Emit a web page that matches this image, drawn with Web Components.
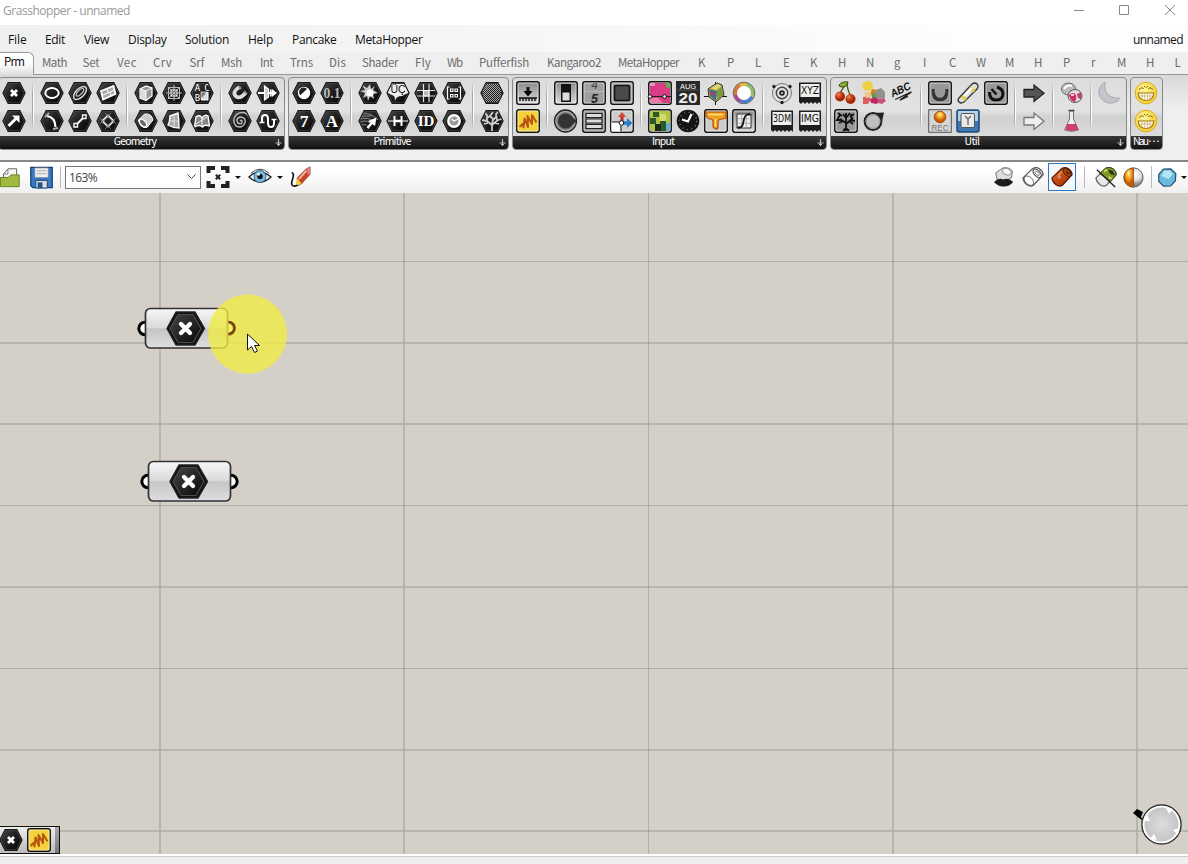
<!DOCTYPE html>
<html lang="en">
<head>
<meta charset="utf-8">
<title>Grasshopper - unnamed</title>
<style>
html,body{margin:0;height:100%;overflow:hidden}
body{font-family:"Open Sans","Noto Sans",sans-serif;font-size:12px}
</style>
</head>
<body>
<gh-window></gh-window>
<script>
const define = (name, css, html, setup) => customElements.define(name, class extends HTMLElement {
  connectedCallback() {
    if (this.shadowRoot) return;
    const root = this.attachShadow({mode: 'open'});
    root.innerHTML = `<style>${css}</style>` + (typeof html === 'function' ? html(this) : html);
    if (setup) setup(this, root);
  }
});

/* ---------- icon library, 24 x 24 units ---------- */
const DEFS = `<defs>
<linearGradient id="hx" x1="0" y1="0" x2="1" y2="1"><stop offset="0" stop-color="#484848"/><stop offset=".45" stop-color="#202020"/><stop offset="1" stop-color="#050505"/></linearGradient>
<linearGradient id="bt" x1="0" y1="0" x2="0" y2="1"><stop offset="0" stop-color="#888"/><stop offset="1" stop-color="#ddd"/></linearGradient>
<radialGradient id="yel" cx=".4" cy=".35"><stop offset="0" stop-color="#fff6a0"/><stop offset="1" stop-color="#f3d640"/></radialGradient>
<radialGradient id="red" cx=".35" cy=".3"><stop offset="0" stop-color="#f08a58"/><stop offset=".5" stop-color="#cf4a1e"/><stop offset="1" stop-color="#a32808"/></radialGradient>
<radialGradient id="gry" cx=".6" cy=".35"><stop offset="0" stop-color="#fff"/><stop offset=".6" stop-color="#ddd"/><stop offset="1" stop-color="#888"/></radialGradient>
<radialGradient id="org" cx=".5" cy=".3"><stop offset="0" stop-color="#fff3a0"/><stop offset=".55" stop-color="#f0a020"/><stop offset="1" stop-color="#c85a06"/></radialGradient>
<linearGradient id="rust" x1="0" y1="0" x2="1" y2="1"><stop offset="0" stop-color="#e07a30"/><stop offset=".5" stop-color="#c4480f"/><stop offset="1" stop-color="#8a2c06"/></linearGradient>
<pattern id="dots" width="2" height="2" patternUnits="userSpaceOnUse"><path d="M0 0h1v1H0zM1 1h1v1H1z" fill="#aaa"/></pattern>
<clipPath id="hc"><path d="M1.6 12 6.6 2h10.8l5 10-5 10H6.6z"/></clipPath></defs>`;
const hex = s => `<path d="M.3 12 5.8 .9H18.2L23.7 12 18.2 23.1H5.8z" fill="#080808"/><path d="M1.7 12 6.6 2.2h10.8l4.9 9.8-4.9 9.8H6.6z" fill="url(#hx)" stroke="#555" stroke-width=".7"/><g clip-path="url(#hc)" fill="none" stroke="#fff" stroke-width="1.8">${s}</g>`;
const frame = (s, bg = 'url(#bt)', st = '#111') => `<rect x=".8" y=".8" width="22.4" height="22.4" rx="2.2" fill="${bg}" stroke="${st}" stroke-width="1.5"/><rect x="2" y="2" width="20" height="20" rx="1" fill="none" stroke="#fff" stroke-opacity=".6" stroke-width=".9"/>${s}`;
const txt = (t, x, y, size, fill, extra = '') => `<text x="${x}" y="${y}" text-anchor="middle" font-size="${size}" fill="${fill}" stroke="none" ${extra}>${t}</text>`;
const serif = 'font-family="Liberation Serif" font-weight="bold"', sans = 'font-family="Liberation Sans"', mono = 'font-family="DejaVu Sans Mono"';
const film = t => `<path d="M1 1.500h22V23l-2-2-2 2-2-2-2 2-2-2-2 2-2-2-2 2-2-2-2 2-2-2z" fill="#1e1e1e"/><path d="M2.500 3h19v13h-19z" fill="#eee"/>${txt(t, 12, 13, 10, '#111', `font-family="DejaVu Sans Condensed" textLength="18" lengthAdjust="spacingAndGlyphs"`)}`;
const smile = `<circle cx="12" cy="12" r="10.800" fill="url(#yel)" stroke="#e0ac18"/><path d="M5 8.500q2.500-3 4.800-1M14.200 7.500q2.300-2 4.800 1M10 5l1.500 1.500M14 5l-1.500 1.500" fill="none" stroke="#8a6508"/><path d="M4.200 12h15.600q-.5 7.500-7.800 7.500T4.200 12z" fill="#fff" stroke="#a5790e" stroke-width="1.200"/><path d="M4.800 15h14.400M8 12v6M10.700 12v7.300M13.400 12v7.300M16 12v6" stroke="#c9a347" stroke-width=".7"/>`;
const arrow = (a, b) => `<path d="M2 8.500h10V4l10 8.200-10 8.200V16H2z" fill="${a}" stroke="${b}" stroke-width="1.300"/>`;
const cyl = (f, s, g) => `<path d="M1 13 12 2.500q4-1.500 7 .5 4 3 4 6.500L12.500 21q-3.500 2-7-.5-4-3-4.500-7.500z" fill="${f}" stroke="${s}" stroke-width="1.300"/>${g}`;
const ICONS = {
  pt: hex('<path d="M9 9l6 6M15 9l-6 6" stroke-width="2.800"/>'),
  vec: hex('<path d="M6.500 17 14 9.500" stroke-width="3"/><path d="M10 6.500h7.500V14z" fill="#fff" stroke="none"/>'),
  circ: hex('<ellipse cx="12" cy="12" rx="6.700" ry="5" stroke-width="2"/>'),
  arc: hex('<path d="M7 7q8 1 8.500 11" stroke-width="2.200"/><path d="M5 8l4-4M13 20l5-1" stroke="#aaa"/>'),
  ell: hex('<ellipse cx="12" cy="12" rx="8" ry="4.300" transform="rotate(-45 12 12)" stroke="#ddd" stroke-width="1.500"/><ellipse cx="12.500" cy="11.500" rx="4.800" ry="2" transform="rotate(-45 12 12)" stroke="#bbb" stroke-width="1.300"/>'),
  line: hex('<path d="M7 17 17 7" stroke-width="1.800"/><path d="M6 14.500h3.500V18H6zM14.500 6H18v3.500h-3.500z" fill="#111" stroke-width="1.400"/>'),
  plane: hex('<path d="M5 10 17.500 5l2 8L7 18.500z" fill="#aaa" stroke-width="1.800"/><path d="M6 14.500 18.500 9M11.500 8l.5 4M14 11l1 4" stroke="#fff" stroke-width="1"/>'),
  rect: hex('<path d="m6.500 12 5.500-5.500 5.500 5.500-5.500 5.500z" stroke-width="1.800"/><path d="m4 9 11 11M9 4l11 11M4 15 15 4M9 20 20 9" stroke="#888" stroke-width=".8"/>'),
  box: hex('<path d="m6 8 6-3 6 2v8l-6 4.500-6-2.500z" fill="#999" stroke-width="1.200"/><path d="m6 8 6 2v9l-6-2z" fill="#ddd" stroke="none"/><path d="m6.500 8 5.500 2 6-3M12 10v9" stroke-width=".9"/>'),
  cyl: hex('<path d="m4.500 11 6-6q7-1 8.500 6l-6 7.500q-7 1-8.500-7.500z" fill="#ccc" stroke-width="1"/><ellipse cx="9" cy="14" rx="2.600" ry="4.500" transform="rotate(-42 9 14)" fill="#666" stroke-width="1.300"/>'),
  mesh: hex('<path d="M6.500 6.500h11v11h-11zM12 4v16M4 12h16M6 6l12 12M18 6 6 18" stroke="#bbb" stroke-width="1"/><path d="M9 9h6v6H9z" stroke-width="1"/>'),
  surf: hex('<path d="m8 7 8-3q1 7 1 15-6 0-11-3 2-4 2-9z" fill="#aaa" stroke-width="1.400"/><path d="M8 12h8M12 6v12" stroke="#eee" stroke-width=".8"/>'),
  abc: hex(`${txt('A', 7.500, 10, 9, '#fff', mono)}${txt('C', 17, 10, 9, '#fff', mono)}${txt('B', 7.500, 19.500, 9, '#fff', mono)}<path d="M18 11v8h-7z" fill="#ddd" stroke-width="1"/><path d="M11 11h6l-6 7z" fill="#777" stroke-width=".7"/>`),
  brep: hex('<path d="M6 8q4-3 6 1 3-4 6-2l1.500 10q-5-2-7 1-3-3-8 0z" fill="#888" stroke-width="1.400"/><path d="M6 15 17 8M12 9v8" stroke-width=".9"/>'),
  mag: hex('<path d="M11.500 6q-8 5-3.500 9.500 4 3 10-4" stroke-width="3.800" stroke="#ddd"/><path d="m11 5 2 3M16 10l2.500 2.500" stroke-width="2" stroke="#888"/>'),
  spiral: hex('<path d="M12 12q2-2 2 1t-4 1q-3-4 2-6 6 0 5 6-3 6-9 3-5-6 1-12 8-4 12 3" stroke="#bbb" stroke-width="1.400"/>'),
  field: hex('<path d="M2 12h15" stroke-width="2"/><path d="m16 8 5 4-5 4z" fill="#fff" stroke="none"/><path d="M8.500 5v14l4-3V8z" stroke-width="1.200" fill="#ccc"/><path d="M14.800 8.500v7" stroke-width="1.800"/>'),
  wave: hex('<path d="M6 13V9q0-3 3-3t3 4v4q0 4 3 4t3-4v-3" stroke-width="2"/><path d="M15.500 10.500h5M3.500 13.500h5" stroke-width="1.500"/>'),
  bool: hex('<circle cx="12" cy="12" r="6.200" fill="#fff" stroke="none"/><path d="M8.300 14.200 15 8a4.500 4.500 0 0 0-6.700 6.200z" fill="#222" stroke="none"/>'),
  num: hex(txt('0.1', 12, 17, 14, '#bbb', serif + ' textLength="17" lengthAdjust="spacingAndGlyphs"')),
  int: hex(txt('7', 12, 18, 17.500, '#fff', serif)),
  str: hex(txt('A', 12, 18, 17, '#fff', serif)),
  color: hex('<path d="m12 3 1 5 4-3-2 4 5 3-5 1 1 5-4-3-2 5-1-5-4 2 2-5-5-2 5-1-3-5 5 3z" fill="#ccc" stroke="none"/><circle cx="12" cy="12" r="3.500" fill="#fff" stroke="none"/>'),
  culture: hex(`<path d="M2 3h20v9l-6 3q-6 0-7 5 0-4-1-5l-6-3z" fill="#eee" stroke="none"/>${txt('ÜÇ', 12, 12, 10.500, '#111', sans)}`),
  matrix: hex('<path d="M9.500 3v18M15 3v18M3 9.500h18M3 15h18" stroke="#ddd" stroke-width="1.200"/><path d="M9.500 9.500H15V15H9.500z" fill="#bbb" stroke-width="1"/>'),
  data: hex('<path d="M7.500 6H5.500v12h2M16.500 6h2v12h-2" stroke-width="1.200"/><path d="M8.500 8h2.500v2.500H8.500zM13 8h2.500v2.500H13zM8.500 13.500h2.500V16H8.500zM13 13.500h2.500V16H13z" stroke-width="1.100"/>'),
  shade: hex('<path d="M3 3h18v18H3z" fill="url(#dots)" stroke="none"/>'),
  path: hex('<path d="M1 7h13M1 10q9-2 15 2M3 13q7-3 11 3M4 16q5-2 7 4M5 4q10 1 15 7" stroke="#888" stroke-width="1"/><path d="m9.500 19 5-6" stroke-width="2.400"/><path d="m10 12 8.500-3.500L17 17z" fill="#fff" stroke="none"/>'),
  domain: hex('<path d="M2 12h20" stroke-width="1.200"/><path d="M8.500 7v10M15.500 7v10" stroke-width="2"/><path d="M8 12h8" stroke-width="2.600"/>'),
  id: hex(txt('ID', 12, 17, 15, '#fff', serif)),
  time: hex('<circle cx="12" cy="12" r="5.700" fill="#999" stroke-width="2.400"/><path d="m9.500 10 2.500 2 4-2" stroke="#fff" stroke-width="1.300"/>'),
  tree: hex('<path d="M12 23v-7l-5-4M12 16l6-5M7 12l-5-1M7 12V6L5 4M18 11l4-1M17 11l-1-6 3-3M12 16l1-6-3-3 3-4M10 7 7 9M13 11l3-3M4 15l4-1M19 15l-4-1" stroke="#ccc" stroke-width="1.800"/>'),
  button: frame('<path d="M3 17h18M4 17v3M7 17v3M10 17v3M13 17v3M16 17v3M19 17v3" stroke="#111" stroke-width="1.400"/><path d="M12 6v5" stroke="#111" stroke-width="3"/><path d="M7.500 10h9L12 15.500z"/>'),
  panel: frame('<path d="m3.500 18 3-3 1 3.500 1-9 3.500 8.500-.5-11 4.500 8 0-9 4.500 7.500" fill="none" stroke="#b8560f" stroke-width="2" stroke-linejoin="round"/>', '#f3d23c'),
  toggle: frame('<path d="M7 3h10v18H7z" fill="#111"/><path d="M8.500 11.500h7v8h-7z" fill="#ddd"/>'),
  scroller: frame(`<g clip-path="url(#hc)">${txt('4', 12.500, 7.500, 12, '#444', sans + ' font-style="italic"')}</g>${txt('5', 12.500, 22, 12.500, '#222', sans + ' font-weight="bold" font-style="italic"')}<path d="M2 10.500h20" stroke="#bbb"/>`, '#a0a0a0'),
  screen: frame('<rect x="4.500" y="4.500" width="15" height="15" rx="1" fill="#4a4a4a" stroke="#111" stroke-width="1.600"/>', '#aaa'),
  knob: '<circle cx="11.500" cy="12" r="11" fill="#aaa" stroke="#222" stroke-width="1.300"/><circle cx="11.500" cy="12" r="9" fill="#777"/><circle cx="11.500" cy="12" r="7.500" fill="#333"/><path d="m15 5.500 8 6.500-8 6.500z" fill="#333"/>',
  list: frame('<path d="M4 4.500h16v4H4zM4 10h16v4H4zM4 15.500h16v4H4z" fill="#ddd" stroke="#222" stroke-width="1.200"/>', '#999'),
  gumball: frame('<path d="M1.500 13H10v9.500H1.500z" fill="#fff"/><path d="M12 13V6" stroke="#b42b25" stroke-width="3"/><path d="m8 8 4-5 4 5z" fill="#d9453b"/><path d="M13 14h5" stroke="#277ec6" stroke-width="3.500"/><path d="m17 9 5.500 5-5.500 5z" fill="#277ec6"/><circle cx="11.500" cy="14" r="2.300" fill="#fff" stroke="#111"/><path d="M2 13h7M11 17v5" stroke="#111"/>', '#ccc'),
  pink: frame('<path d="M2 2h20v20H2z" fill="#d83c85"/><path d="M17 2h5v5h-3z" fill="#67ae52"/><path d="M2 2h5v3H2z" fill="#ee93b8"/><path d="M2 17h8l5 5H2z" fill="#eb7da8"/><path d="M1 15.500h22" stroke="#222"/><circle cx="2" cy="15.500" r="1.800" fill="#fff" stroke="#111"/><circle cx="16.500" cy="15.500" r="1.800" fill="#fff" stroke="#111"/>'),
  map: frame('<path d="M2 2h20v20H2z" fill="#b1c444"/><path d="M5 3h6v5H5zM2 9h6v6H2zM12 12h6v10h-6z" fill="#2d5a27"/><path d="M7 15h6v7H7z" fill="#172b17"/><path d="M18 14h4v8h-4z" fill="#63b3d0"/><path d="M12 5h6v7h-6z" fill="#d5d86d"/>'),
  date: `<path d="M0 0h24v24H0z" fill="#292929"/>${txt('AUG', 12, 7.500, 7.500, '#fff', sans + ' textLength="16"')}<path d="M1 9h22" stroke="#555"/>${txt('20', 12, 21.500, 15, '#eee', sans + ' font-weight="bold" textLength="19" lengthAdjust="spacingAndGlyphs"')}`,
  clock: '<circle cx="12" cy="12" r="11.300" fill="#151515"/><circle cx="12" cy="12" r="8.700" fill="none" stroke="#888" stroke-width="1.300" stroke-dasharray="1 3.600"/><path d="M6 10.500 12 12.500 15.500 5" fill="none" stroke="#fff" stroke-width="2.200"/>',
  cube: '<path d="M0 15.500h23M11.500 1v23" stroke="#111"/><path d="m4 8 9-6 5 2 2 10-8 7-7-5z" fill="#c9b23e" stroke="#333"/><path d="m5 8 8 2-1 10-6-5z" fill="#3f6e96"/><path d="m13 9 5-3 1 8-6 5z" fill="#7c9c40"/><path d="m7 7 7-4 3 2-5 4z" fill="#ddd57c"/><path d="m6 10 5 2v3l-5-2z" fill="#a8425a"/>',
  gradient: frame('<path d="M2 3h20v6q-2 1-4 1-4 0-4 3v5q-1 4-3 1-2 1-2-3v-4q0-2-3-2-2 0-4-3z" fill="#eea022" stroke="#b94e05" stroke-width="1.200"/><path d="M4 5.500h15M11.500 10v8" stroke="#ffe478" stroke-width="1.400"/>', '#ccc'),
  wheel: '<circle cx="12" cy="12" r="8.500" fill="#fff" stroke="#e8b93c" stroke-width="4"/><path d="M4 15A8.500 8.500 0 0 1 8 4.500" fill="none" stroke="#d9783c" stroke-width="4"/><path d="M14 3.700A8.500 8.500 0 0 1 20 14" fill="none" stroke="#8cc070" stroke-width="4"/><path d="M19.500 15.500a8.500 8.500 0 0 1-10.500 4.500" fill="none" stroke="#3f7fd6" stroke-width="4"/><path d="M9 20a8.500 8.500 0 0 1-5-6" fill="none" stroke="#a9469a" stroke-width="4"/><circle cx="12" cy="12" r="7" fill="#fff"/><circle cx="12" cy="12" r="10.800" fill="none" stroke="#666"/>',
  graph: frame('<path d="M5 5h14v14H5z" fill="#eee" stroke="#333"/><path d="M5 9.700h14M5 14.300h14M9.700 5v14M14.300 5v14" stroke="#999" stroke-width=".7"/><path d="M5.500 18.500h2q3 0 4-6t4-7h3" fill="none" stroke="#111" stroke-width="1.800"/>'),
  atom: '<circle cx="12" cy="12" r="9.500" fill="none" stroke="#777"/><circle cx="12" cy="12" r="5.700" fill="none" stroke="#444" stroke-width="1.400"/><circle cx="12" cy="12" r="2.800" fill="#222"/><circle cx="12" cy="12" r="1" fill="#ddd"/><circle cx="4" cy="5.500" r="1.700" fill="#222"/><circle cx="20" cy="5.500" r="1.700" fill="#222"/><circle cx="12" cy="21.500" r="1.700" fill="#222"/>',
  dm: film('3DM'), xyz: film('XYZ'), img: film('IMG'),
  cherry: '<path d="M6 13q2-6 7-10 1 8 4 12" fill="none" stroke="#4c5b19" stroke-width="1.400"/><path d="M5 4q3-4 9-3-1 5-6 5-3 0-3-2z" fill="#8ab429" stroke="#3b4b13"/><circle cx="6" cy="15.500" r="5" fill="url(#red)"/><circle cx="16.500" cy="18" r="5" fill="url(#red)"/>',
  darktree: frame('<path d="M12 22v-8l-6-4M12 15l7-6M12 14V4M8 11H3l3-5M16 11l5 1M18 10l-1-5M9 5l3 4 4-5M5 14l4-2M15 12l4 3M4 4l4 3M16 8l4-3M9 22l3-3 3 3" fill="none" stroke="#111" stroke-width="1.800"/>', '#999'),
  fruit: '<path d="m1 2 4-2 5 1 1 6-3 3-6-1-2-4z" fill="#efd040"/><path d="m10 8 5 1-2 8-5-3z" fill="#d3881b"/><path d="m14 9 5-2 4 4v6l-8 1-3-4z" fill="#92928c"/><path d="m10 12 4 1v4l-4 1z" fill="#5d9c50"/><path d="m1 16 5-1 3 3-3 5H1z" fill="#d86060"/><path d="m8 18 5-2 4 3-2 4-6-1z" fill="#bd2763"/><path d="m16 18 6-1 2 3-4 3-4-1z" fill="#c95276"/><path d="m2 11 6 0 2 5-6 1z" fill="#f0c58f"/>',
  lens: '<path d="m12 4 10-.5-2 9z" fill="#222"/><circle cx="11" cy="12.500" r="8.400" fill="#c0c0c0" stroke="#222" stroke-width="2"/><circle cx="11" cy="12.500" r="6.800" fill="none" stroke="#999"/>',
  spell: `<g transform="rotate(-25 12 12)">${txt('ABC', 12, 12, 11, '#111', sans + ' font-weight="bold" font-style="italic" textLength="21" lengthAdjust="spacingAndGlyphs"')}<path d="M3 15h18L7 17.500h9" fill="none" stroke="#222" stroke-width="1.300"/></g>`,
  disk: frame('<path d="M5.500 8v3q0 7.500 6.500 7.500T18.500 11V8" fill="none" stroke="#333" stroke-width="3.500"/><circle cx="12" cy="10" r="5.500" fill="#999"/>', '#999'),
  rec: `<rect x=".7" y=".7" width="22.600" height="22.600" fill="#d5d5d5" stroke="#555"/><circle cx="12" cy="8" r="5.800" fill="url(#org)" stroke="#a35113"/>${txt('REC', 12, 22, 9, '#777', sans + ' textLength="17" lengthAdjust="spacingAndGlyphs"')}`,
  tube: '<path d="M3 17 16 3q3-2 5 0t0 5L8 21q-3 2-5 0t0-4z" fill="#ddd" stroke="#333" stroke-width="1.300"/><path d="m6 15 4 4M14 6l4.500 4.500" stroke="#e2d030" stroke-width="2.600"/><path d="m8 15 8-8" stroke="#fff" stroke-width="2"/>',
  blue: '<rect x="1" y="1" width="22" height="22" rx="2" fill="#3e79b4" stroke="#1e4775" stroke-width="1.500"/><path d="M2 2h20v10H2z" fill="#b8d0e5"/><rect x="5" y="4.500" width="13.500" height="14" rx="1.500" fill="#e9e9e9" stroke="#555"/><path d="m9 7 3 3 3-3M12 10v6" fill="none" stroke="#666" stroke-width="1.300"/>',
  timer: frame('<path d="M5.500 11q0 8 6.500 8t7-6q0-5-6-7" fill="none" stroke="#111" stroke-width="3"/><path d="m12.500 13.500-5-5.500" stroke="#111" stroke-width="2.500"/>', '#999'),
  ar1: arrow('#555', '#222'), ar2: arrow('#eee', '#777'),
  balls: '<ellipse cx="8.500" cy="8" rx="7" ry="6" fill="#bbb" stroke="#666"/><path d="M4 8q3-5 8-3" fill="none" stroke="#fff" stroke-width="2"/><ellipse cx="15" cy="15" rx="7" ry="6.500" fill="#ddd" stroke="#555"/><path d="M9 14q4-4 7 0 1 4-1 7-5-1-6-7z" fill="#cb2f65"/><path d="m17 13 4-2v7l-3-1z" fill="#c53d61"/><path d="M11 14h3" stroke="#fff" stroke-width="1.500"/>',
  flask: '<path d="M9.500 2h4v8l5 11q-7 3-14 0l5-11z" fill="#eee" stroke="#777"/><path d="M7 15h9l2.500 6q-7 2-13 0z" fill="#d0406c"/><path d="M8.500 1.500h6" stroke="#444" stroke-width="1.500"/>',
  moon: '<path d="M7 1Q-2 7 2 16q7 10 18 4l1.500-3Q12 18 8 11q-2-5-1-10z" fill="#c4c4cc" stroke="#aaa"/>',
  smile,
  folder: '<path d="m4 8 5-6h10v14H4z" fill="#f4f4f4" stroke="#555"/><path d="M9 3v5H4" fill="none" stroke="#777"/><path d="M.5 12h9l3-3H22v13.500H.5z" fill="#a0ba40" stroke="#647a19"/>',
  save: '<path d="M.8 1.500h22.400v21H3l-2.200-2z" fill="#3579c8" stroke="#193d72" stroke-width="1.300"/><path d="M5 2h14v10H5z" fill="#eee" stroke="#888" stroke-width=".7"/><path d="M7 5h10M7 8h10" stroke="#aaa"/><path d="M6 15h12v8H6z" fill="#ddd" stroke="#1b3f69"/><path d="M8 17h5v6H8z" fill="#1f5795"/>',
  extents: '<path d="M2.500 8V3H9M15 3h6.500v5M21.500 16v5H15M9 21H2.500v-5" fill="none" stroke="#222" stroke-width="4"/><path d="m9.800 9.800 4.400 4.400M14.200 9.800l-4.400 4.400" stroke="#222" stroke-width="2"/>',
  eye: '<path d="M0 12Q11 1 24 12 12 23 0 12z" fill="#eef5f8" stroke="#20282f" stroke-width="1.600"/><circle cx="12" cy="11.500" r="6.500" fill="#7cbde4" stroke="#255577"/><circle cx="12" cy="11.500" r="3" fill="#111"/><circle cx="10.500" cy="9" r="1.500" fill="#fff"/><path d="M2 8Q12-1 22 8" fill="none" stroke="#333"/>',
  sketch: '<path d="M3 7q3 1 1 7-3 8 2 8 4-1 5-2" fill="none" stroke="#111" stroke-width="1.800"/><path d="M9 13 19 3l4-2v8L13 20l-4 0z" fill="#c94628" stroke="#7a2c20" stroke-width=".8"/><path d="m11 14 8-9" stroke="#f4bca0" stroke-width="2"/><path d="m19 3 4-2v8l-2 1z" fill="#d88080"/><path d="m8 20 1-7 4.500 6-3 2z" fill="#f0d01c"/>',
  pv0: '<path d="m2 7 9-6q8-1 11 4l-1 8-9 4-8-1z" fill="#ddd" stroke="#777" stroke-width="1.200"/><ellipse cx="15.500" cy="5.500" rx="5.500" ry="3.800" transform="rotate(15 15 5)" fill="#f4f4f4" stroke="#888"/><path d="M0 18q6-6 11-3 6-3 12 3-5 6-12 5.500T0 18z" fill="#1d1d1d"/>',
  pv1: cyl('#fff', '#555', '<ellipse cx="7.500" cy="16" rx="4" ry="6" transform="rotate(-45 7.500 16)" fill="none" stroke="#666"/><ellipse cx="16.500" cy="8" rx="3.200" ry="5.500" transform="rotate(-45 16.500 8)" fill="none" stroke="#555" stroke-width="1.300"/><ellipse cx="16.500" cy="8" rx="1.500" ry="3" transform="rotate(-45 16.500 8)" fill="none" stroke="#777"/>'),
  pv2: cyl('url(#rust)', '#541b08', '<ellipse cx="17.500" cy="7" rx="3" ry="5.500" transform="rotate(-45 17.500 7)" fill="#b04a14" stroke="#43190a"/><path d="m15.500 4.500 5 4-2.500.5z" fill="#3c1405"/><path d="m8 10 4-4" stroke="#ef9b55" stroke-width="1.500"/><circle cx="9" cy="12" r="1.800" fill="#e7a9c0" opacity=".7"/>'),
  pv3: cyl('#e8e8e8', '#666', '<path d="m5 8 7-6q5-1 8 1 4 3 3 7l-6 7z" fill="#829825" stroke="#303a10"/><path d="m14 4 5 1 3 5-5-1z" fill="#253812"/><path d="m10 6 3-2M15 12l3 2" stroke="#d2df72" stroke-width="2"/><path d="m2 4 20 19" stroke="#222" stroke-width="1.500"/>'),
  pv4: '<circle cx="12" cy="12" r="11" fill="url(#gry)" stroke="#555"/><path d="M12 1a11 11 0 0 0 0 22z" fill="url(#org)" stroke="#8b4a10" stroke-width=".8"/>',
  pv5: '<path d="m7 1.500 9-.5 6.500 6-.5 9-6 6.500-9 .5-6-6 0-9z" fill="#6bb9de" stroke="#22536c" stroke-width="1.500"/><path d="m8 3 7 0 4 5-6 6-9-4z" fill="#b5e4f3"/>'
};
define('gh-icon', `:host{display:block;width:var(--s,24px);height:var(--s,24px);flex:none}svg{display:block;width:100%;height:100%;overflow:visible}`,
  el => `<svg viewBox="0 0 24 24">${DEFS}${ICONS[el.getAttribute('name')]}</svg>`);

/* A label whose letter spacing is adjusted so that it fills the given width. */
define('fit-label', `:host{display:block;white-space:nowrap;flex:none}span{display:inline-block}`, '<span><slot></slot></span>', (el, root) => {
  const s = root.querySelector('span'), w = +el.getAttribute('w'), n = el.textContent.length;
  if (w && n > 1) s.style.letterSpacing = (w - s.getBoundingClientRect().width) / n + 'px';
});
const row = items => items.map(([t, x, w], i) => `<fit-label w="${w}" style="width:${(items[i + 1] ? items[i + 1][1] : x + w + 1) - x}px">${t}</fit-label>`).join('');

define('title-bar', `:host{display:flex;height:25px;background:#fff;color:#999;align-items:center;box-sizing:border-box;padding:0 11px 5px 3px}svg{margin:0 0 1px auto;display:block}`,
  `<fit-label w="127">Grasshopper - unnamed</fit-label><svg width="104" height="12" fill="none" stroke="#888"><path d="M1 6.500h10M46.500 1.500h9v9h-9zM92 1l10 10M102 1 92 11"/></svg>`);

define('menu-bar', `:host{display:flex;height:27px;box-sizing:border-box;padding:1px 5px 0 8px;align-items:center;color:#111;background:linear-gradient(90deg,#efefef,#fdfdfd 80%)}.r{margin-left:auto}`,
  row([['File',8,18.500],['Edit',45,20],['View',84,25],['Display',128,38.500],['Solution',185,44],['Help',248,25],['Pancake',292,44.500],['MetaHopper',355,67.500]]) + '<fit-label class="r" w="50">unnamed</fit-label>');

const tabs = [['Math',42,25],['Set',82.500,17],['Vec',117,20],['Crv',153,19],['Srf',189.500,15],['Msh',221,21],['Int',260,13],['Trns',290,23],['Dis',329,17],['Shader',362,36],['Fly',415,16],['Wb',447,15],['Pufferfish',479,50],['Kangaroo2',547,54],['MetaHopper',618,61],['K',698],['P',727],['L',755],['E',783],['K',810],['H',838],['N',866],['g',894],['I',923],['C',949],['W',976],['M',1005],['H',1034],['P',1063],['r',1091],['M',1117],['H',1146],['L',1174.500]].map(([t,x,w]) => [t,x,w||0]);
define('tab-strip', `:host{display:flex;height:23px;box-sizing:border-box;background:#efefef;font-family:"Noto Sans CJK JP",sans-serif;font-size:11.500px;color:#6c6c6c;border-bottom:1px solid #999;line-height:21px;position:relative;z-index:1}
.on{width:34px;height:23px;flex:none;box-sizing:border-box;background:linear-gradient(#fff,#fff 45%,#dedede);border:1px solid #999;border-width:1px 1px 0 0;border-radius:0 6px 0 0;padding-left:4px;color:#111;line-height:17px}
.items{display:flex;flex:1;padding-left:8px}`,
  `<div class="on"><fit-label w="20">Prm</fit-label></div><div class="items">${row(tabs)}</div>`);

/* Ribbon panel: groups are separated by "|", columns by a space, the two rows of a column by "/". */
define('ribbon-panel', `:host{display:flex;flex-direction:column;flex:none;box-sizing:border-box;height:73px;border:1px solid #888;border-radius:4px;overflow:hidden;background:linear-gradient(#dcdcdc,#e3e3e3 45%,#d1d1d1 55%,#e2e2e2)}
.g{display:flex;height:58px;padding:1px 0 0 1px;box-sizing:border-box;flex:none}
.c{width:28px;display:grid;grid-template-rows:28px 28px;place-items:center;flex:none}
i{width:10px;height:50px;margin-top:3px;flex:none;background:linear-gradient(transparent,#aaa 25%,#aaa 75%,transparent) 4px 0/1px 100% no-repeat,linear-gradient(transparent,#fff 25%,#fff 75%,transparent) 5px 0/1px 100% no-repeat}
.b{height:13px;flex:none;background:linear-gradient(#383838,#111);color:#fff;display:flex;font:10.500px/9px "Noto Sans CJK JP",sans-serif;padding-right:1px}
fit-label{margin:0 auto}
.b svg{flex:none;margin:3px 0 0 4px}`,
  el => `<div class="g">${el.getAttribute('icons').split('|').map(g => g.trim().split(' ').map(c => `<div class="c">${c.split('/').map(n => `<gh-icon name="${n}"></gh-icon>`).join('')}</div>`).join('')).join('<i></i>')}</div><div class="b"><fit-label w="${el.getAttribute('tw')}">${el.getAttribute('label')}</fit-label>${el.hasAttribute('nomore') ? '' : '<svg width="8" height="8"><path d="M3.500 0v7M.5 4h6M2 5.500h3" stroke="#bbb" stroke-width="1.200"/></svg>'}</div>`);

define('tool-ribbon', `:host{display:flex;height:87px;box-sizing:border-box;padding-top:2px;background:linear-gradient(#d8d8d8,#efefef 40%);border-bottom:2px solid #888;align-items:flex-start}
ribbon-panel:nth-of-type(1){width:287px;margin-left:-2px}ribbon-panel:nth-of-type(2){width:221px;margin-left:3px}ribbon-panel:nth-of-type(3){width:315px;margin-left:3px}ribbon-panel:nth-of-type(4){width:297px;margin-left:3px}ribbon-panel:nth-of-type(5){width:33px;margin-left:3px}`,
`<ribbon-panel label="Geometry" tw="42.500" icons="pt/vec|circ/arc ell/line plane/rect|box/cyl mesh/surf abc/brep|mag/spiral field/wave"></ribbon-panel>
<ribbon-panel label="Primitive" tw="37" icons="bool/int num/str|color/path culture/domain matrix/id data/time|shade/tree"></ribbon-panel>
<ribbon-panel label="Input" tw="22" icons="button/panel|toggle/knob scroller/list screen/gumball|pink/map date/clock cube/gradient wheel/graph|atom/dm xyz/img"></ribbon-panel>
<ribbon-panel label="Util" tw="15" icons="cherry/darktree fruit/lens spell|disk/rec tube/blue timer|ar1/ar2|balls/flask|moon"></ribbon-panel>
<ribbon-panel label="Nau···" tw="26" nomore icons="smile/smile"></ribbon-panel>`);

define('canvas-toolbar', `:host{display:flex;height:31px;align-items:center;background:linear-gradient(#fff 30%,#efefef);box-sizing:border-box;--s:22px;padding-bottom:1px}
.sep{width:1px;height:22px;background:#bbb;flex:none}.caret{border:3px solid transparent;border-top:3px solid #111;border-bottom:0;flex:none}
.combo{width:136px;height:23px;border:1px solid #777;background:#fff;box-sizing:border-box;display:flex;align-items:center;padding:0 4px 0 3px;color:#444;flex:none}.combo svg{margin-left:auto}
.sel{width:28px;height:28px;border:1px solid #2f78c2;background:#f4f8fc;box-sizing:border-box;display:grid;place-items:center;flex:none}`,
`<gh-icon name="folder" style="--s:21px"></gh-icon><gh-icon name="save" style="--s:23px;margin-left:9px"></gh-icon><span class="sep" style="margin:0 4px 0 7px"></span>
<div class="combo"><fit-label w="28">163%</fit-label><svg width="9" height="6" fill="none" stroke="#444"><path d="m.5.5 4 4 4-4"/></svg></div>
<gh-icon name="extents" style="--s:24px;margin-left:5px"></gh-icon><span class="caret" style="margin:0 7px 0 5px"></span><gh-icon name="eye" style="margin-left:1px"></gh-icon><span class="caret" style="margin:0 6px 0 6px"></span><gh-icon name="sketch"></gh-icon>
<gh-icon name="pv0" style="--s:20px;margin-left:auto"></gh-icon><gh-icon name="pv1" style="margin:0 4px 0 8px"></gh-icon><div class="sel"><gh-icon name="pv2"></gh-icon></div><span class="sep" style="margin:0 10px 0 8px"></span><gh-icon name="pv3"></gh-icon><gh-icon name="pv4" style="--s:21px;margin:0 7px 0 6px"></gh-icon><span class="sep"></span><gh-icon name="pv5" style="--s:19px;margin:0 4px 0 6px"></gh-icon><span class="caret" style="margin-right:1px"></span>`);

define('param-node', `:host{display:block;position:absolute;width:99px;height:42px}svg{display:block;overflow:visible}`,
`<svg width="99" height="42"><defs><linearGradient id="n" x1="0" y1="0" x2="0" y2="1"><stop offset="0" stop-color="#f7f7f7"/><stop offset=".48" stop-color="#dadada"/><stop offset=".52" stop-color="#c6c6c6"/><stop offset="1" stop-color="#dedede"/></linearGradient><linearGradient id="k" x1="0" y1="0" x2="1" y2="1"><stop offset="0" stop-color="#444"/><stop offset="1" stop-color="#080808"/></linearGradient></defs>
<g fill="#fff" stroke="#000" stroke-width="3"><circle cx="8" cy="21.500" r="6.200"/><circle cx="91" cy="21.500" r="6.200"/></g>
<rect x="8.500" y="1.500" width="82" height="39.500" rx="5" fill="url(#n)" stroke="#303036" stroke-width="1.700"/>
<path d="M30 21.500 39 5h19L67.500 21.500 58 38H39z" fill="#111" stroke="#222" stroke-width="1.500" stroke-linejoin="round"/><path d="m33 21.500 8-14h15l8 14-8 14H41z" fill="url(#k)" stroke="#4c4c4c" stroke-width="1.200"/>
<path d="m44 17 9 9M53 17l-9 9" stroke="#fff" stroke-width="4.300" stroke-linecap="round"/></svg>`);

define('node-canvas', `:host{display:block;position:relative;flex:1;overflow:hidden;background:#d4d0c8}
.grid{position:absolute;inset:0}.halo,.cur{position:absolute}.halo{left:206.500px;top:101px}.cur{left:246px;top:140px}
.recent{position:absolute;left:-2px;bottom:0;width:60px;height:26px;border:1px solid #111;background:linear-gradient(#eee,#bbb);display:flex;align-items:center;gap:4px}
.recent b{margin-left:auto;width:6px;height:100%;background:linear-gradient(#aaa,#777)}
.compass{position:absolute;left:1130px;top:609px}`,
`<svg class="grid" width="1188" height="661" stroke="#3c4637"><path stroke-opacity=".25" stroke-width="1.500" d="M160 0v661M404 0v661M893 0v661M1137 0v661M0 150h1188M0 231h1188M0 394h1188M0 557h1188M0 638h1188"/><path stroke-opacity=".24" d="M648.500 0v661M0 68.500h1188M0 312.500h1188M0 475.500h1188"/></svg>
<param-node style="left:136.500px;top:114px"></param-node><param-node style="left:140px;top:267px"></param-node>
<svg class="halo" width="80" height="80"><circle cx="40.500" cy="40" r="39.500" fill="#efec43" fill-opacity=".78"/><path d="M21.500 28a6 6 0 0 1 0 12" fill="none" stroke="#7d4214" stroke-width="2.600"/></svg>
<svg class="cur" width="14" height="22"><path d="M1.500 1v16l4-3.500 3 6 3-1.500-3-5.500h5z" fill="#fff" stroke="#111"/></svg>
<div class="recent"><gh-icon name="pt"></gh-icon><gh-icon name="panel"></gh-icon><b></b></div>
<svg class="compass" width="58" height="52"><defs><radialGradient id="c"><stop offset="0" stop-color="#ddd"/><stop offset="1" stop-color="#c2c2c2"/></radialGradient></defs><path d="m3 11 4-4 6 3-2 5 4 5-6-4z"/><circle cx="31.500" cy="22.500" r="19.500" fill="url(#c)" stroke="#333" stroke-width="1.500"/><circle cx="31.500" cy="22.500" r="17.900" fill="none" stroke="#fff" stroke-width="1.800"/><path d="m14 19 3-7 3 7zM36 6l7 1-4 5zM43 28l6-2-1 7zM20 37l7 1-3-6z" fill="#fff"/></svg>`);

define('status-bar', `:host{display:block;height:10px;box-sizing:border-box;background:#efefef;border-top:2px solid #fff;box-shadow:inset 0 1px #ccc;flex:none}`, '');

define('gh-window', `:host{display:flex;flex-direction:column;width:1188px;height:864px;overflow:hidden;background:#efefef}title-bar,menu-bar,tab-strip,tool-ribbon,canvas-toolbar{flex:none}`,
'<title-bar></title-bar><menu-bar></menu-bar><tab-strip></tab-strip><tool-ribbon></tool-ribbon><canvas-toolbar></canvas-toolbar><node-canvas></node-canvas><status-bar></status-bar>');
</script>
</body>
</html>
